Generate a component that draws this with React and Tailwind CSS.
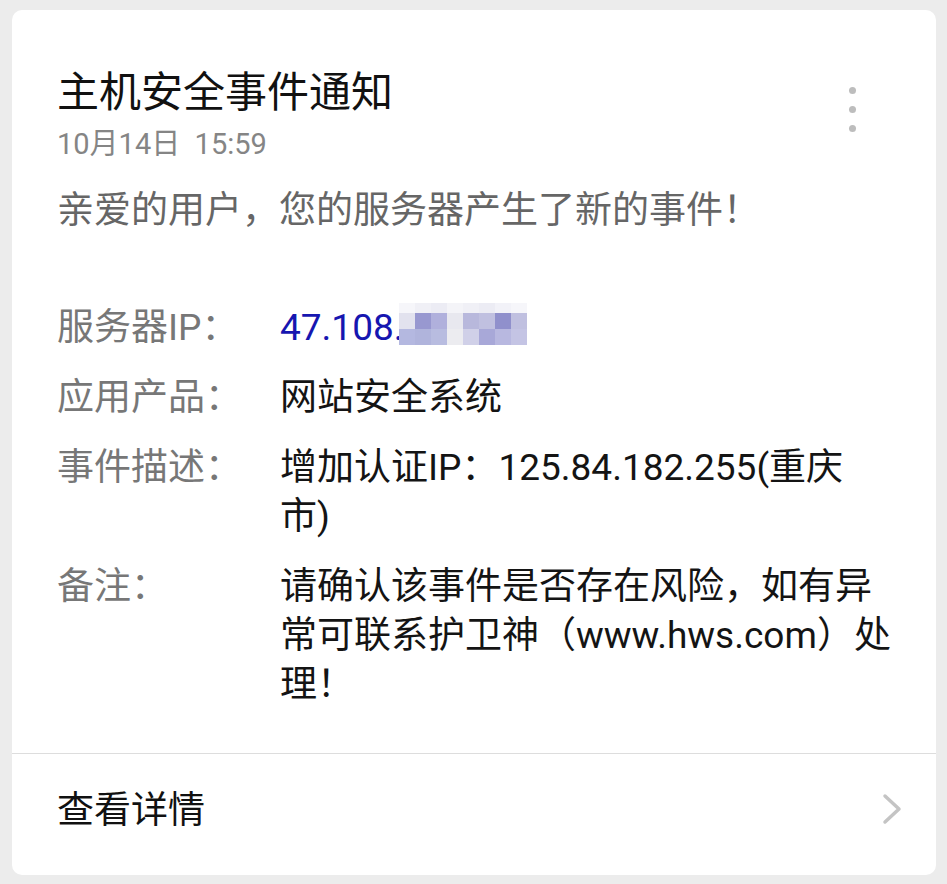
import React from "react";

const FONT = { fontFamily: "Roboto, 'Noto Sans CJK SC', sans-serif" };

const mosaic = [
  ["#f6f6fa", "#f0f0f6", "#ececf4", "#f4f4f8", "#f0f0f6", "#ececf4", "#f2f2f8", "#f6f6fa"],
  ["#e2e2ee", "#9898d0", "#b0b0dc", "#e8e8ef", "#b8b8dc", "#c0c0e0", "#9090cc", "#c0c0e0"],
  ["#b4b8e0", "#b0b4dc", "#b8bce0", "#ececf0", "#d0d0e8", "#a8a8d8", "#b8b8e0", "#c4c4e4"]
];

function Mosaic() {
  return (
    <div className="ml-[-4px] flex flex-col">
      {mosaic.map((row, i) => (
        <div key={i} className={i === 0 ? "flex h-[10px]" : "flex h-[16px]"}>
          {row.map((c, j) => (
            <div key={j} className="h-full w-[16px]" style={{ backgroundColor: c }} />
          ))}
        </div>
      ))}
    </div>
  );
}

function Row({ label, children }) {
  return (
    <div className="flex items-start text-[37px] leading-[49px]">
      <div className="w-[223px] shrink-0 text-[#777777]">{label}</div>
      <div className="w-[622px] text-[#141414]">{children}</div>
    </div>
  );
}

export default function App() {
  return (
    <div className="min-h-screen bg-[#ececec] px-[12px] py-[10px]" style={FONT}>
      <div className="w-[924px] overflow-hidden rounded-[10px] bg-white">
        <div className="flex items-start justify-between px-[45px] pt-[59px]">
          <div>
            <div className="text-[42px] leading-[48px] text-[#111111]">主机安全事件通知</div>
            <div className="mt-[10px] text-[29px] leading-[34px] text-[#858585]">10月14日&nbsp;&nbsp;15:59</div>
          </div>
          <button type="button" className="mr-[35px] mt-[18px] flex flex-col gap-[12px]" aria-label="更多">
            <span className="h-[7px] w-[7px] rounded-full bg-[#bdbdbd]" />
            <span className="h-[7px] w-[7px] rounded-full bg-[#bdbdbd]" />
            <span className="h-[7px] w-[7px] rounded-full bg-[#bdbdbd]" />
          </button>
        </div>

        <div className="mt-[25px] px-[45px] text-[37px] leading-[49px] text-[#666666]">
          亲爱的用户，您的服务器产生了新的事件！
        </div>

        <div className="mt-[68px] flex flex-col gap-[21px] px-[45px] pb-[44px]">
          <Row label="服务器IP：">
            <div className="flex items-start">
              <span className="text-[#1616b0]">47.108.</span>
              <Mosaic />
            </div>
          </Row>
          <Row label="应用产品：">网站安全系统</Row>
          <Row label="事件描述：">增加认证IP：125.84.182.255(重庆市)</Row>
          <Row label="备注：">请确认该事件是否存在风险，如有异常可联系护卫神（www.hws.com）处理！</Row>
        </div>

        <div className="h-px bg-[#dddddd]" />

        <div className="flex items-center justify-between pb-[40px] pl-[45px] pr-[34px] pt-[32px]">
          <span className="text-[37px] leading-[49px] text-[#111111]">查看详情</span>
          <svg width="20" height="32" viewBox="0 0 20 32" fill="none" className="mb-[4px]">
            <polyline points="3,3 17,16 3,29" stroke="#c4c4c4" strokeWidth="3.5" strokeLinecap="round" strokeLinejoin="round" />
          </svg>
        </div>
      </div>
    </div>
  );
}
